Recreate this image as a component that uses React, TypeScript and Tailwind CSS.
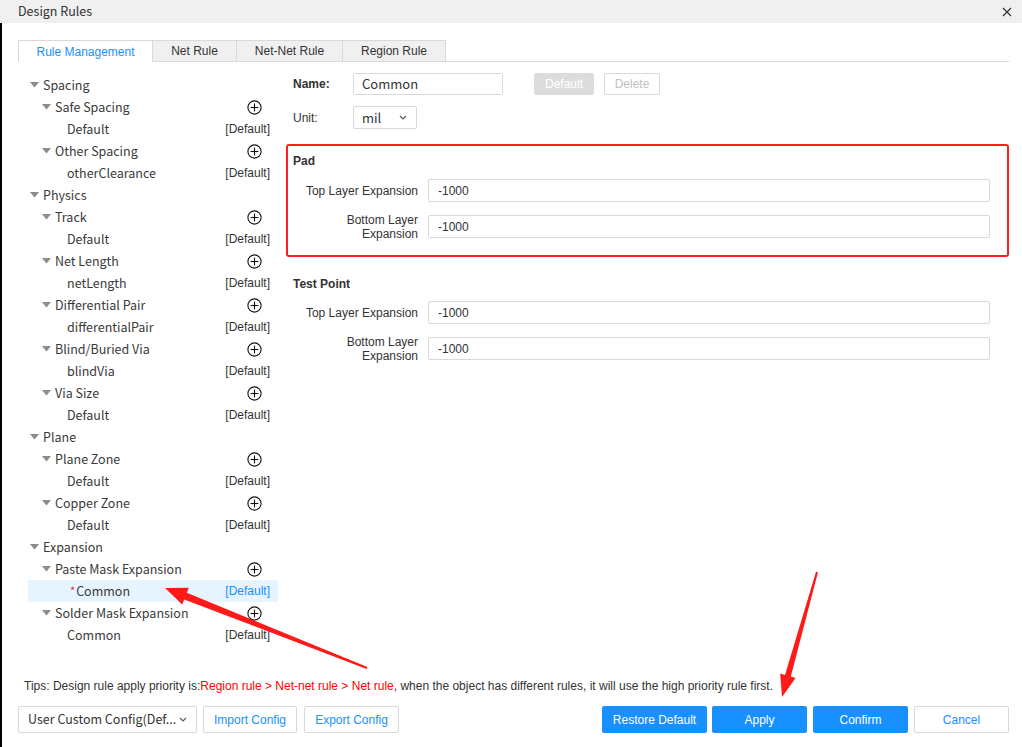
import React from "react";

type Node = {
    label: string;
    level: 0 | 1 | 2;
    plus?: boolean;
    def?: boolean;
    selected?: boolean;
};

const tree: Node[] = [
    { label: "Spacing", level: 0 },
    { label: "Safe Spacing", level: 1, plus: true },
    { label: "Default", level: 2, def: true },
    { label: "Other Spacing", level: 1, plus: true },
    { label: "otherClearance", level: 2, def: true },
    { label: "Physics", level: 0 },
    { label: "Track", level: 1, plus: true },
    { label: "Default", level: 2, def: true },
    { label: "Net Length", level: 1, plus: true },
    { label: "netLength", level: 2, def: true },
    { label: "Differential Pair", level: 1, plus: true },
    { label: "differentialPair", level: 2, def: true },
    { label: "Blind/Buried Via", level: 1, plus: true },
    { label: "blindVia", level: 2, def: true },
    { label: "Via Size", level: 1, plus: true },
    { label: "Default", level: 2, def: true },
    { label: "Plane", level: 0 },
    { label: "Plane Zone", level: 1, plus: true },
    { label: "Default", level: 2, def: true },
    { label: "Copper Zone", level: 1, plus: true },
    { label: "Default", level: 2, def: true },
    { label: "Expansion", level: 0 },
    { label: "Paste Mask Expansion", level: 1, plus: true },
    { label: "Common", level: 2, def: true, selected: true },
    { label: "Solder Mask Expansion", level: 1, plus: true },
    { label: "Common", level: 2, def: true },
];

const cjk = "font-['Noto_Sans_CJK_SC',sans-serif]";
const arial = "font-['Liberation_Sans',Arial,sans-serif]";

function Caret() {
    return (
        <svg width="9" height="6" viewBox="0 0 9 6" className="shrink-0">
            <polygon points="0,0 9,0 4.5,5.5" fill="#8c8c8c" />
        </svg>
    );
}

function PlusCircle() {
    return (
        <svg width="15" height="15" viewBox="0 0 15 15">
            <circle cx="7.5" cy="7.5" r="6.6" fill="none" stroke="#111" strokeWidth="1.1" />
            <line x1="3.6" y1="7.5" x2="11.4" y2="7.5" stroke="#111" strokeWidth="1.1" />
            <line x1="7.5" y1="3.6" x2="7.5" y2="11.4" stroke="#111" strokeWidth="1.1" />
        </svg>
    );
}

function TreeRow({ n }: { n: Node }) {
    const pad = n.level === 0 ? "pl-[2px]" : n.level === 1 ? "pl-[14px]" : n.selected ? "pl-[42px]" : "pl-[39px]";
    return (
        <div className={`flex items-center h-[22px] ${pad} ${n.selected ? "bg-[#e6f4ff]" : ""} ${n.plus ? "pr-[16px]" : "pr-[8px]"}`}>
            {n.level < 2 && <Caret />}
            <span className={`${cjk} text-[12.5px] text-[#3a3a3a] ${n.level < 2 ? "ml-[4px]" : ""} flex-1 whitespace-nowrap`}>
                {n.selected && <span className="text-[#f5222d] text-[11px] mr-[1px] relative -top-[1px]">*</span>}
                {n.label}
            </span>
            {n.plus && <PlusCircle />}
            {n.def && (
                <span className={`${arial} text-[12px] ${n.selected ? "text-[#1890ff]" : "text-[#333]"}`}>[Default]</span>
            )}
        </div>
    );
}

function Field({ label, twoLine }: { label: string; twoLine?: string }) {
    return (
        <div className="flex items-center h-[23px]">
            <div className={`${arial} w-[125px] text-right text-[12px] text-[#333] leading-[14px]`}>
                {label}
                {twoLine && (
                    <>
                        <br />
                        {twoLine}
                    </>
                )}
            </div>
            <div className="ml-[10px] w-[562px] h-[23px] border border-[#d9d9d9] rounded-[2px] flex items-center pl-[9px]">
                <span className={`${arial} text-[12px] text-[#333]`}>-1000</span>
            </div>
        </div>
    );
}

function Chevron() {
    return (
        <svg width="8" height="5" viewBox="0 0 8 5" className="shrink-0">
            <polyline points="1,1 4,4 7,1" fill="none" stroke="#555" strokeWidth="1.1" />
        </svg>
    );
}

export default function App() {
    return (
        <div className="relative w-[1022px] h-[747px] bg-white flex flex-col overflow-hidden">
            {/* title bar */}
            <div className="h-[23px] bg-[#f0f0f0] flex items-center justify-between pl-[18px] pr-[10px]">
                <span className={`${cjk} text-[12.5px] text-[#333]`}>Design Rules</span>
                <svg width="10" height="10" viewBox="0 0 10 10">
                    <path d="M1 1 L9 9 M9 1 L1 9" stroke="#333" strokeWidth="1.2" />
                </svg>
            </div>

            <div className="flex-1 flex flex-col border-l-[2px] border-black pl-[16px] pr-[13px]">
                {/* tabs */}
                <div className="mt-[17px] flex border-b border-[#d9d9d9] h-[22px]">
                    <div className={`${arial} w-[135px] h-[22px] bg-white border border-b-0 border-[#d9d9d9] text-[12px] text-[#1890ff] flex items-center justify-center`}>
                        Rule Management
                    </div>
                    {[
                        ["Net Rule", "w-[84px]"],
                        ["Net-Net Rule", "w-[106px]"],
                        ["Region Rule", "w-[103px]"],
                    ].map(([t, w]) => (
                        <div
                            key={t}
                            className={`${arial} ${w} h-[21px] bg-[#f0f0f0] border-t border-r border-[#d9d9d9] text-[12px] text-[#333] flex items-center justify-center`}
                        >
                            {t}
                        </div>
                    ))}
                </div>

                <div className="flex mt-[12px]">
                    {/* tree */}
                    <div className="ml-[10px] w-[250px]">
                        {tree.map((n, i) => (
                            <TreeRow key={i} n={n} />
                        ))}
                    </div>

                    {/* right side */}
                    <div className="ml-[8px] flex-1 -mt-[1px]">
                        <div className="flex items-center pl-[7px]">
                            <span className={`${arial} w-[60px] text-[12px] font-bold text-[#333]`}>Name:</span>
                            <div className="w-[150px] h-[22px] border border-[#d9d9d9] rounded-[2px] flex items-center pl-[8px]">
                                <span className={`${cjk} text-[13px] text-[#333]`}>Common</span>
                            </div>
                            <div className={`${arial} ml-[31px] w-[60px] h-[22px] bg-[#dcdcdc] rounded-[2px] text-white text-[12px] flex items-center justify-center`}>
                                Default
                            </div>
                            <div className={`${arial} ml-[10px] w-[56px] h-[22px] border border-[#d9d9d9] rounded-[2px] text-[#bfbfbf] text-[12px] flex items-center justify-center`}>
                                Delete
                            </div>
                        </div>
                        <div className="flex items-center pl-[7px] mt-[11px]">
                            <span className={`${arial} w-[60px] text-[12px] text-[#333]`}>Unit:</span>
                            <div className="w-[64px] h-[23px] border border-[#d9d9d9] rounded-[2px] flex items-center justify-between pl-[8px] pr-[9px]">
                                <span className={`${cjk} text-[13px] text-[#333]`}>mil</span>
                                <Chevron />
                            </div>
                        </div>

                        {/* Pad */}
                        <div className="mt-[15px] border-2 border-[#ff1e1e] rounded-[3px] pl-[5px] pt-[6px] pb-[17px]">
                            <div className={`${arial} text-[12px] font-bold text-[#333] h-[16px]`}>Pad</div>
                            <div className="mt-[11px] flex flex-col gap-[13px]">
                                <Field label="Top Layer Expansion" />
                                <Field label="Bottom Layer" twoLine="Expansion" />
                            </div>
                        </div>

                        {/* Test Point */}
                        <div className="pl-[7px] mt-[18px]">
                            <div className={`${arial} text-[12px] font-bold text-[#333] h-[16px]`}>Test Point</div>
                            <div className="mt-[10px] flex flex-col gap-[13px]">
                                <Field label="Top Layer Expansion" />
                                <Field label="Bottom Layer" twoLine="Expansion" />
                            </div>
                        </div>
                    </div>
                </div>

                {/* footer */}
                <div className="mt-auto pb-[14px]">
                    <div className={`${arial} text-[12px] text-[#333] pl-[6px] whitespace-nowrap`}>
                        Tips: Design rule apply priority is:
                        <span className="text-[#ff0000]">Region rule &gt; Net-net rule &gt; Net rule</span>
                        , when the object has different rules, it will use the high priority rule first.
                    </div>
                    <div className="mt-[11px] flex items-center">
                        <div className="w-[179px] h-[27px] border border-[#d9d9d9] rounded-[2px] flex items-center justify-between pl-[9px] pr-[9px]">
                            <span className={`${cjk} text-[12.5px] text-[#333] whitespace-nowrap`}>User Custom Config(Def...</span>
                            <Chevron />
                        </div>
                        <div className={`${arial} ml-[6px] w-[94px] h-[27px] border border-[#d9d9d9] rounded-[2px] text-[12px] text-[#1890ff] flex items-center justify-center`}>
                            Import Config
                        </div>
                        <div className={`${arial} ml-[7px] w-[95px] h-[27px] border border-[#d9d9d9] rounded-[2px] text-[12px] text-[#1890ff] flex items-center justify-center`}>
                            Export Config
                        </div>
                        <div className="flex-1" />
                        <div className={`${arial} w-[105px] h-[27px] bg-[#1890ff] rounded-[2px] text-[12px] text-white flex items-center justify-center`}>
                            Restore Default
                        </div>
                        <div className={`${arial} ml-[5px] w-[95px] h-[27px] bg-[#1890ff] rounded-[2px] text-[12px] text-white flex items-center justify-center`}>
                            Apply
                        </div>
                        <div className={`${arial} ml-[6px] w-[95px] h-[27px] bg-[#1890ff] rounded-[2px] text-[12px] text-white flex items-center justify-center`}>
                            Confirm
                        </div>
                        <div className={`${arial} ml-[6px] w-[95px] h-[27px] border border-[#d9d9d9] rounded-[2px] text-[12px] text-[#1890ff] flex items-center justify-center`}>
                            Cancel
                        </div>
                    </div>
                </div>
            </div>

            {/* annotation arrows */}
            <svg className="absolute left-0 top-0 pointer-events-none" width="1022" height="747" viewBox="0 0 1022 747">
                <polygon
                    points="165,588 188.8,587.8 186.8,592.8 367.4,667.1 366.6,668.9 184.2,599.4 182.2,604.5"
                    fill="#ff1a1a"
                />
                <polygon
                    points="782,697 795.6,678 790.8,676.6 818,572.3 816,571.7 785,675 780.2,673.6"
                    fill="#ff1a1a"
                />
            </svg>
        </div>
    );
}
